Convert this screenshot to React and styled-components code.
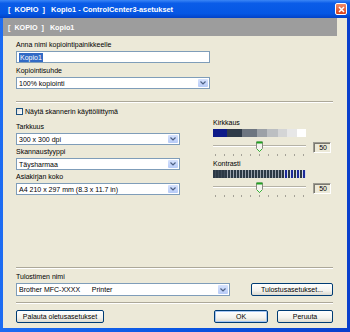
import React from "react";
import styled, { createGlobalStyle } from "styled-components";

const Global = createGlobalStyle`
  body { margin: 0; }
  * { box-sizing: border-box; }
`;

const FONT = `"Liberation Sans", Arial, sans-serif`;

const Frame = styled.div`
  width: 350px;
  height: 332px;
  display: flex;
  flex-direction: column;
  background: linear-gradient(to right, #1d6cf2 0%, #0a56e2 50%, #0a3fcc 100%);
  font-family: ${FONT};
`;

const TitleBar = styled.div`
  height: 18px;
  flex: none;
  display: flex;
  align-items: center;
  padding: 0 3px 0 8px;
  background: linear-gradient(#3b86f6 0%, #0a5ce8 18%, #0557e4 75%, #0342c6 100%);
`;

const TitleText = styled.div`
  flex: 1;
  color: #fff;
  font-weight: bold;
  font-size: 7.4px;
  white-space: pre;
`;

const CloseBtn = styled.div`
  width: 12px;
  height: 12px;
  border: 1px solid #fff;
  border-radius: 2px;
  background: linear-gradient(#f08a68, #d9421c);
  display: flex;
  align-items: center;
  justify-content: center;
`;

const Body = styled.div`
  flex: 1;
  margin: 0 3px 4px 3px;
  background: #ece9d8;
  display: flex;
  flex-direction: column;
`;

const Header = styled.div`
  height: 18px;
  flex: none;
  margin-right: 10px;
  background: #9d9d9d;
  color: #fff;
  font-weight: bold;
  font-size: 7.2px;
  padding-left: 5px;
  display: flex;
  align-items: center;
  white-space: pre;
`;

const Content = styled.div`
  flex: 1;
  display: flex;
  flex-direction: column;
  padding: 4px 14px 5px 13px;
`;

const Label = styled.div`
  height: 10px;
  line-height: 10px;
  font-size: 7px;
  color: #000;
  margin-top: ${(p) => p.$mt || 0}px;
  white-space: nowrap;
`;

const TextBox = styled.div`
  width: ${(p) => p.$w}px;
  height: 12px;
  margin-top: 1px;
  border: 1px solid #7f9db9;
  background: #fff;
  display: flex;
  align-items: center;
  padding-left: 2px;
  font-size: 7px;
`;

const Selected = styled.span`
  background: #316ac5;
  color: #fff;
  padding: 0 1px;
  line-height: 9px;
`;

const SelectBox = styled.div`
  width: ${(p) => p.$w}px;
  height: ${(p) => p.$h || 12}px;
  margin-top: ${(p) => (p.$mt === undefined ? 1 : p.$mt)}px;
  border: 1px solid #7f9db9;
  background: #fff;
  display: flex;
  align-items: stretch;
  font-size: 7px;
`;

const SelectText = styled.div`
  flex: 1;
  padding-left: 2px;
  display: flex;
  align-items: center;
  white-space: pre;
`;

const Arrow = styled.div`
  width: 10px;
  margin: 1px;
  border-radius: 1px;
  background: linear-gradient(#d6e2fd, #b7cbf7);
  display: flex;
  align-items: center;
  justify-content: center;
`;

const Separator = styled.div`
  height: 2px;
  margin-top: ${(p) => p.$mt || 0}px;
  border-top: 1px solid #aca899;
  border-bottom: 1px solid #fff;
`;

const CheckRow = styled.div`
  height: 11px;
  margin-top: 3px;
  display: flex;
  align-items: center;
  gap: 2px;
  font-size: 7px;
`;

const CheckBox = styled.div`
  width: 7px;
  height: 7px;
  border: 1px solid #1c5180;
  background: linear-gradient(135deg, #dcdcd7, #fff);
`;

const Columns = styled.div`
  display: flex;
  gap: 33px;
  align-items: flex-start;
`;

const LeftCol = styled.div`
  width: 164px;
  padding-top: 5px;
  display: flex;
  flex-direction: column;
`;

const RightCol = styled.div`
  width: 120px;
  padding-top: 1px;
  display: flex;
  flex-direction: column;
`;

const BarRow = styled.div`
  width: 93px;
  height: 8px;
  margin-top: 1px;
  display: flex;
`;

const Seg = styled.div`
  width: ${(p) => p.$w}px;
  background: ${(p) => p.$c};
`;

const SliderRow = styled.div`
  margin-top: 4px;
  display: flex;
  gap: 7px;
  align-items: flex-start;
`;

const SliderArea = styled.div`
  position: relative;
  width: 93px;
  height: 16px;
`;

const Track = styled.div`
  position: absolute;
  left: 0;
  right: 0;
  top: 4px;
  height: 2px;
  border-top: 1px solid #b5b2a6;
  border-bottom: 1px solid #fff;
`;

const Thumb = styled.svg`
  position: absolute;
  top: 0;
`;

const Ticks = styled.div`
  position: absolute;
  left: 2px;
  right: 2px;
  top: 13px;
  display: flex;
  justify-content: space-between;
`;

const Tick = styled.div`
  width: 1px;
  height: 2px;
  background: #a4a197;
`;

const ValueBox = styled.div`
  width: 18px;
  height: 11px;
  margin-top: 1px;
  border: 1px solid #9e9c92;
  border-right-color: #fff;
  border-bottom-color: #fff;
  box-shadow: inset 1px 1px 0 #7b7970;
  font-size: 7px;
  display: flex;
  align-items: center;
  justify-content: flex-end;
  padding-right: 3px;
`;

const Spacer = styled.div`
  flex: 1;
`;

const PrinterRow = styled.div`
  margin-top: 1px;
  display: flex;
  justify-content: space-between;
  align-items: center;
`;

const Button = styled.div`
  width: ${(p) => p.$w}px;
  height: 13px;
  border: 1px solid #003c74;
  border-radius: 2px;
  background: linear-gradient(#ffffff 0%, #f4f3ee 60%, #dcdad0 100%);
  font-size: 7px;
  display: flex;
  align-items: center;
  justify-content: center;
  white-space: nowrap;
  box-shadow: ${(p) => (p.$def ? "inset 0 0 0 1px #a6c6f4" : "none")};
`;

const ButtonRow = styled.div`
  margin-top: 6px;
  display: flex;
  align-items: center;
  justify-content: space-between;
`;

const ButtonGroup = styled.div`
  display: flex;
  gap: 9px;
`;

const Chevron = () => (
  <svg width="6" height="4" viewBox="0 0 6 4">
    <path d="M0.5 0.5 L3 3 L5.5 0.5" fill="none" stroke="#4d6185" strokeWidth="1.2" />
  </svg>
);

function Select({ w, h, mt, children }) {
  return (
    <SelectBox $w={w} $h={h} $mt={mt}>
      <SelectText>{children}</SelectText>
      <Arrow>
        <Chevron />
      </Arrow>
    </SelectBox>
  );
}

function Slider({ value }) {
  const ticks = Array.from({ length: 11 });
  const left = Math.round((value / 100) * 86);
  return (
    <SliderRow>
      <SliderArea>
        <Track />
        <Ticks>
          {ticks.map((_, i) => (
            <Tick key={i} />
          ))}
        </Ticks>
        <Thumb width="7" height="11" viewBox="0 0 7 11" style={{ left }}>
          <path d="M0.5 1 H6.5 V7.5 L3.5 10.5 L0.5 7.5 Z" fill="#f4f3ee" stroke="#8a8a80" strokeWidth="1" />
          <rect x="0.5" y="0.5" width="6" height="2" fill="#21a121" />
          <path d="M1 8 L3.5 10.5 L6 8" fill="none" stroke="#34b534" strokeWidth="1" />
        </Thumb>
      </SliderArea>
      <ValueBox>{value}</ValueBox>
    </SliderRow>
  );
}

const brightness = [
  ["#0d1a88", 14],
  ["#2f3b49", 15],
  ["#6d7580", 15],
  ["#9ca1a7", 10],
  ["#bcbfc2", 11],
  ["#d4d5d6", 9],
  ["#e7e7e7", 10],
  ["#ffffff", 9],
];

function ContrastBar() {
  const stripes = [];
  for (let i = 0; i < 31; i++) {
    const x = i * 3;
    let dark = "#2c3946";
    let light = i < 4 ? "#3c4956" : "#9aa2ad";
    if (i > 22 && i % 2 === 0) dark = "#1c2a9a";
    if (i > 22) light = "#d8dde6";
    stripes.push(<rect key={"d" + i} x={x} y="0" width="2" height="8" fill={dark} />);
    stripes.push(<rect key={"l" + i} x={x + 2} y="0" width="1" height="8" fill={light} />);
  }
  return (
    <svg width="93" height="8" viewBox="0 0 93 8" style={{ marginTop: 1, display: "block" }}>
      {stripes}
    </svg>
  );
}

export default function App() {
  return (
    <>
      <Global />
      <Frame>
        <TitleBar>
          <TitleText>{"[  KOPIO  ]   Kopio1 - ControlCenter3-asetukset"}</TitleText>
          <CloseBtn>
            <svg width="7" height="7" viewBox="0 0 7 7">
              <path d="M1 1 L6 6 M6 1 L1 6" stroke="#fff" strokeWidth="1.5" />
            </svg>
          </CloseBtn>
        </TitleBar>
        <Body>
          <Header>{"[  KOPIO  ]   Kopio1"}</Header>
          <Content>
            <Label>Anna nimi kopiointipainikkeelle</Label>
            <TextBox $w={194}>
              <Selected>Kopio1</Selected>
            </TextBox>
            <Label $mt={3}>Kopiointisuhde</Label>
            <Select w={194}>100% kopiointi</Select>
            <Separator $mt={12} />
            <CheckRow>
              <CheckBox />
              Näytä skannerin käyttöliittymä
            </CheckRow>
            <Columns>
              <LeftCol>
                <Label>Tarkkuus</Label>
                <Select w={164}>300 x 300 dpi</Select>
                <Label $mt={2}>Skannaustyyppi</Label>
                <Select w={164}>Täysharmaa</Select>
                <Label $mt={2}>Asiakirjan koko</Label>
                <Select w={164}>A4 210 x 297 mm (8.3 x 11.7 in)</Select>
              </LeftCol>
              <RightCol>
                <Label>Kirkkaus</Label>
                <BarRow>
                  {brightness.map(([c, w], i) => (
                    <Seg key={i} $c={c} $w={w} />
                  ))}
                </BarRow>
                <Slider value={50} />
                <Label $mt={2}>Kontrasti</Label>
                <ContrastBar />
                <Slider value={50} />
              </RightCol>
            </Columns>
            <Spacer />
            <Separator />
            <Label $mt={3}>Tulostimen nimi</Label>
            <PrinterRow>
              <Select w={214} h={13} mt={0}>{"Brother MFC-XXXX      Printer"}</Select>
              <Button $w={82}>Tulostusasetukset...</Button>
            </PrinterRow>
            <Separator $mt={6} />
            <ButtonRow>
              <Button $w={88}>Palauta oletusasetukset</Button>
              <ButtonGroup>
                <Button $w={54} $def>OK</Button>
                <Button $w={56}>Peruuta</Button>
              </ButtonGroup>
            </ButtonRow>
          </Content>
        </Body>
      </Frame>
    </>
  );
}
